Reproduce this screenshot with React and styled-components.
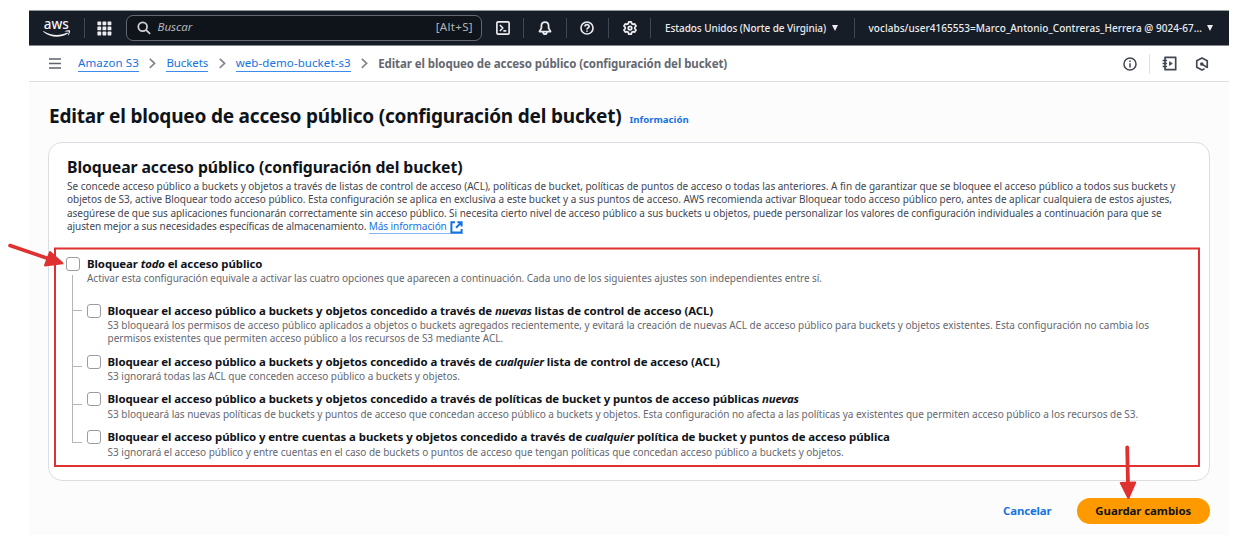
import React from 'react';
import styled, { createGlobalStyle } from 'styled-components';

const GlobalStyle = createGlobalStyle`
  *, *::before, *::after { box-sizing: border-box; }
  body {
    margin: 0;
    background: #fff;
    color: #0f141a;
    font-family: "Noto Sans", "Open Sans", sans-serif;
    overflow: hidden;
  }
  svg { display: block; flex: none; }
`;

const Page = styled.div`
  position: relative;
  width: 1238px;
  height: 545px;
  padding: 10px 9px 0 29px;
`;

const Console = styled.div`
  height: 525px;
  background: #fcfcfd;
`;

const TopBar = styled.header`
  display: flex;
  align-items: center;
  height: 36px;
  padding-left: 14px;
  background: #161d26;
  border-top: 1px solid #8f9c98;
  border-bottom: 1px solid #84878c;
  color: #ebebf0;
`;

const Divider = styled.span`
  flex: none;
  width: 1px;
  height: 20px;
  margin: 0 ${p => p.$right}px 0 ${p => p.$left}px;
  background: ${p => p.$color || '#424650'};
`;

const Search = styled.div`
  display: flex;
  align-items: center;
  width: 356px;
  height: 26px;
  margin: 0 13.5px 0 14px;
  padding: 0 8px 0 10px;
  background: #0f141a;
  border: 1px solid #656871;
  border-radius: 7px;
  font-size: 11.5px;
  line-height: 16px;
  color: #b4b4bb;
`;

const Placeholder = styled.span`
  flex: 1;
  margin: -2px 0 0 6.5px;
  font-style: italic;
`;

const Shortcut = styled.span`
  margin-top: -2px;
  letter-spacing: 0.33px;
`;

const NavText = styled.span`
  font-size: 10px;
  font-weight: 500;
  line-height: 14px;
  white-space: nowrap;
  letter-spacing: ${p => p.$ls}px;
`;

const Caret = styled.span`
  width: 0;
  height: 0;
  margin-left: ${p => p.$gap}px;
  border: 3.5px solid transparent;
  border-top: 6px solid #ebebf0;
  border-bottom: 0;
`;

const Crumbs = styled.nav`
  display: flex;
  align-items: center;
  height: 36px;
  padding: 0 20px 0 20px;
  background: #fff;
  border-bottom: 1px solid #dedee3;
  font-size: 11.5px;
  white-space: nowrap;
`;

const CrumbLink = styled.a`
  height: 16px;
  margin: 0 ${p => p.$right}px 0 ${p => p.$left}px;
  line-height: 14px;
  color: #1473e2;
  border-bottom: 1px solid #3d8bea;
  letter-spacing: ${p => p.$ls}px;
`;

const CrumbCurrent = styled.span`
  flex: 1;
  margin-left: 10px;
  font-weight: 700;
  color: #656871;
  letter-spacing: -0.078px;
`;

const TitleRow = styled.div`
  display: flex;
  align-items: baseline;
  height: 60px;
  padding: 20px 0 0 20px;
  white-space: nowrap;
`;

const Title = styled.h1`
  margin: 0;
  font-size: 19px;
  line-height: 28px;
  letter-spacing: -0.195px;
`;

const InfoLink = styled.a`
  margin-left: 8px;
  font-size: 9.6px;
  font-weight: 700;
  color: #1473e2;
`;

const Card = styled.section`
  width: 1162px;
  height: 339px;
  margin-left: 19px;
  padding: 13.5px 18px 0;
  background: #fff;
  border: 1px solid #dcdde2;
  border-radius: 14px;
`;

const CardTitle = styled.h2`
  margin: 0 0 3.4px;
  font-size: 15.8px;
  line-height: 20px;
  letter-spacing: -0.1px;
  white-space: nowrap;
`;

const Line = styled.div`
  height: 13.4px;
  font-size: 10px;
  line-height: 13.4px;
  white-space: nowrap;
  color: ${p => (p.$dark ? '#424650' : '#656871')};
  letter-spacing: ${p => p.$ls ?? -0.02}px;
`;

const MoreLink = styled.a`
  display: inline-flex;
  align-items: center;
  height: 14px;
  margin-left: 2.5px;
  color: #1473e2;
  box-shadow: inset 0 -1px 0 #86b7f0;

  svg { margin-left: 3px; }
`;

const Options = styled.div`
  margin-top: 21.1px;
`;

const Option = styled.div`
  position: relative;
  display: flex;
  align-items: flex-start;
  gap: 7px;
`;

const Children = styled.div`
  position: relative;
  display: flex;
  flex-direction: column;
  gap: 7px;
  margin-top: 16.2px;
  padding-left: 20.6px;

  &::before {
    content: '';
    position: absolute;
    left: 5px;
    top: -27px;
    width: 1px;
    height: 168px;
    background: #b4b6bb;
  }
`;

const Branch = styled(Option)`
  &::before {
    content: '';
    position: absolute;
    left: -15px;
    top: ${p => p.$tick}px;
    width: 9px;
    height: 1px;
    background: #b4b6bb;
  }
`;

const Checkbox = styled.span`
  flex: none;
  width: 14px;
  height: 14px;
  margin: 2px 0 0 -1px;
  background: #fff;
  border: 1px solid #9a9ca3;
  border-radius: 3px;
`;

const Label = styled.div`
  height: 17px;
  margin-bottom: 0.4px;
  font-size: 11.4px;
  font-weight: 700;
  line-height: 17px;
  letter-spacing: -0.068px;
  white-space: nowrap;

  em { letter-spacing: -0.2px; }
`;

const Actions = styled.footer`
  display: flex;
  justify-content: flex-end;
  align-items: center;
  height: 26px;
  margin: 17px 19px 0 0;
  font-size: 11.4px;
  font-weight: 700;
  line-height: 16px;
`;

const Cancel = styled.a`
  margin-right: 25px;
  padding-bottom: 1px;
  color: #1473e2;
  letter-spacing: -0.14px;
`;

const Save = styled.button`
  width: 133.5px;
  height: 26px;
  padding: 0 0 1px;
  border: 0;
  border-radius: 13px;
  background: #ff9900;
  color: #0f141a;
  font: inherit;
  letter-spacing: -0.06px;
`;

const Annotations = styled.svg`
  position: absolute;
  left: 0;
  top: 0;
  pointer-events: none;
`;

const AwsLogo = () => (
  <svg width="28" height="32" viewBox="0 -6 28 32" fill="#f3f3f7">
    <text x="0.8" y="10.5" fontSize="15" fontWeight="500" textLength="25" lengthAdjust="spacingAndGlyphs">aws</text>
    <path d="M0.4 13C8 18 17 18.2 24.4 14.6L25 15.6C17 20.4 7.5 19.8 0.2 13.8Z" />
    <path d="M21.6 13.2C23.5 12 26.5 12.1 27 12.6C27.4 13.3 26.6 16.3 25.3 17.4L24.9 17.2C25.6 15.6 26 14.1 25.7 13.7C25.3 13.2 23.4 13.4 21.8 13.6Z" />
  </svg>
);

const AppsIcon = () => (
  <svg width="15" height="15" viewBox="0 0 15 15" fill="#ebebf0">
    {[0.4, 5.5, 10.6].map(y => [0.4, 5.5, 10.6].map(x => (
      <rect key={`${x}-${y}`} x={x} y={y} width="3.8" height="3.8" rx="0.6" />
    )))}
  </svg>
);

const Stroke = ({ size = 14, color = '#ebebf0', width = 1.6, children }) => (
  <svg width={size} height={size} viewBox="0 0 16 16" fill="none" stroke={color} strokeWidth={width} strokeLinejoin="round">
    {children}
  </svg>
);

const SearchIcon = () => (
  <Stroke color="#d0d0d6" width={2}><circle cx="6.5" cy="6.5" r="5" /><path d="M10.2 10.2L15 14.8" /></Stroke>
);
const TerminalIcon = () => (
  <Stroke width={1.9}><rect x="1" y="1" width="14" height="14" rx="1.4" /><path d="M4.4 4.6L7.8 8L4.4 11.4M8.4 11.3H11.8" /></Stroke>
);
const BellIcon = () => (
  <Stroke width={2}><path d="M8 1.2C5.2 1.2 3.9 3.2 3.9 5.5V8.1L1.7 12H14.3L12.1 8.1V5.5C12.1 3.2 10.8 1.2 8 1.2Z" /><path d="M5.8 12.4C5.9 15.8 10.1 15.8 10.2 12.4" /></Stroke>
);
const HelpIcon = () => (
  <Stroke width={1.9}><circle cx="8" cy="8" r="6.9" /><path d="M5.7 6.4C5.7 3.4 10.4 3.5 10.4 6.2C10.4 8 8 7.8 8 9.7M8 10.8V12.4" /></Stroke>
);
const GearIcon = () => (
  <Stroke width={2}>
    <path d="M6.6 1H9.4L10 3L11.4 3.8L13.4 3.3L14.9 5.7L13.5 7.2V8.8L14.9 10.3L13.4 12.7L11.4 12.2L10 13L9.4 15H6.6L6 13L4.6 12.2L2.6 12.7L1.1 10.3L2.5 8.8V7.2L1.1 5.7L2.6 3.3L4.6 3.8L6 3Z" />
    <circle cx="8" cy="8" r="2" />
  </Stroke>
);
const MenuIcon = () => (
  <svg width="12" height="12" viewBox="0 0 12 12" stroke="#5f626b" strokeWidth="1.7">
    <path d="M0 1H12M0 5.5H12M0 10H12" />
  </svg>
);
const Chevron = () => (
  <svg width="7" height="11" viewBox="0 0 7 11" fill="none" stroke="#85868f" strokeWidth="1.7">
    <path d="M0.8 0.8L5.6 5.3L0.8 9.8" />
  </svg>
);
const InfoIcon = () => (
  <Stroke color="#424650" width={1.7}><circle cx="8" cy="8" r="6.9" /><path d="M8 7V12M8 4V5.8" /></Stroke>
);
const NotebookIcon = () => (
  <Stroke size={15} color="#424650" width={1.8}>
    <path d="M3.2 1.4H14.6V14.6H3.2ZM0.6 4.8H5.4M0.6 8H5.4M0.6 11.2H5.4" />
    <path d="M8 6V10L11 8Z" fill="#424650" strokeWidth="0.8" />
  </Stroke>
);
const HexIcon = () => (
  <Stroke color="#424650" width={1.9}>
    <path d="M11 13.3L8 14.9L2 11.6V4.4L8 1.1L14 4.4V12L8.4 8.4" />
    <circle cx="7.8" cy="8" r="1.1" fill="#424650" />
  </Stroke>
);
const ExternalIcon = () => (
  <svg width="13" height="13" viewBox="0 0 13 13" fill="none" stroke="#1473e2" strokeWidth="2">
    <path d="M5 1.2H1.4V11.6H11.6V8M7.4 1.2H11.6V5.4M11.4 1.4L6 6.8" />
  </svg>
);

const INTRO = [
  ['Se concede acceso público a buckets y objetos a través de listas de control de acceso (ACL), políticas de bucket, políticas de puntos de acceso o todas las anteriores. A fin de garantizar que se bloquee el acceso público a todos sus buckets y', -0.018],
  ['objetos de S3, active Bloquear todo acceso público. Esta configuración se aplica en exclusiva a este bucket y a sus puntos de acceso. AWS recomienda activar Bloquear todo acceso público pero, antes de aplicar cualquiera de estos ajustes,', -0.023],
  ['asegúrese de que sus aplicaciones funcionarán correctamente sin acceso público. Si necesita cierto nivel de acceso público a sus buckets u objetos, puede personalizar los valores de configuración individuales a continuación para que se', -0.041],
];

const OPTIONS = [
  {
    tick: 8.6,
    label: <>Bloquear el acceso público a buckets y objetos concedido a través de <em>nuevas</em> listas de control de acceso (ACL)</>,
    lines: [
      'S3 bloqueará los permisos de acceso público aplicados a objetos o buckets agregados recientemente, y evitará la creación de nuevas ACL de acceso público para buckets y objetos existentes. Esta configuración no cambia los',
      'permisos existentes que permiten acceso público a los recursos de S3 mediante ACL.',
    ],
  },
  {
    tick: 13.3,
    label: <>Bloquear el acceso público a buckets y objetos concedido a través de <em>cualquier</em> lista de control de acceso (ACL)</>,
    lines: ['S3 ignorará todas las ACL que conceden acceso público a buckets y objetos.'],
  },
  {
    tick: 14,
    label: <>Bloquear el acceso público a buckets y objetos concedido a través de políticas de bucket y puntos de acceso públicas <em>nuevas</em></>,
    lines: ['S3 bloqueará las nuevas políticas de buckets y puntos de acceso que concedan acceso público a buckets y objetos. Esta configuración no afecta a las políticas ya existentes que permiten acceso público a los recursos de S3.'],
  },
  {
    tick: 13.5,
    label: <>Bloquear el acceso público y entre cuentas a buckets y objetos concedido a través de <em>cualquier</em> política de bucket y puntos de acceso pública</>,
    lines: ['S3 ignorará el acceso público y entre cuentas en el caso de buckets o puntos de acceso que tengan políticas que concedan acceso público a buckets y objetos.'],
  },
];

export default function App() {
  return (
    <Page>
      <GlobalStyle />
      <Console>
        <TopBar>
          <AwsLogo />
          <Divider $left={13} $right={12} />
          <AppsIcon />
          <Search>
            <SearchIcon />
            <Placeholder>Buscar</Placeholder>
            <Shortcut>[Alt+S]</Shortcut>
          </Search>
          <TerminalIcon />
          <Divider $left={13.5} $right={13.5} />
          <BellIcon />
          <Divider $left={14} $right={13.5} />
          <HelpIcon />
          <Divider $left={13.5} $right={14} />
          <GearIcon />
          <Divider $left={13.5} $right={14} />
          <NavText $ls={-0.073}>Estados Unidos (Norte de Virginia)</NavText>
          <Caret $gap={5.5} />
          <Divider $left={16} $right={14} />
          <NavText $ls={0.038}>voclabs/user4165553=Marco_Antonio_Contreras_Herrera @ 9024-67...</NavText>
          <Caret $gap={5} />
        </TopBar>

        <Crumbs>
          <MenuIcon />
          <CrumbLink $left={17} $right={10.5} $ls={0.12}>Amazon S3</CrumbLink>
          <Chevron />
          <CrumbLink $left={10} $right={10.5} $ls={-0.1}>Buckets</CrumbLink>
          <Chevron />
          <CrumbLink $left={10} $right={10.5} $ls={0.08}>web-demo-bucket-s3</CrumbLink>
          <Chevron />
          <CrumbCurrent>Editar el bloqueo de acceso público (configuración del bucket)</CrumbCurrent>
          <InfoIcon />
          <Divider $left={12.5} $right={12} $color="#dedee3" />
          <NotebookIcon />
          <Divider $left={16} $right={1} $color="transparent" />
          <HexIcon />
        </Crumbs>

        <TitleRow>
          <Title>Editar el bloqueo de acceso público (configuración del bucket)</Title>
          <InfoLink>Información</InfoLink>
        </TitleRow>

        <Card>
          <CardTitle>Bloquear acceso público (configuración del bucket)</CardTitle>
          {INTRO.map(([text, ls]) => <Line key={text} $dark $ls={ls}>{text}</Line>)}
          <Line $dark $ls={-0.075}>
            ajusten mejor a sus necesidades específicas de almacenamiento.
            <MoreLink>Más información<ExternalIcon /></MoreLink>
          </Line>

          <Options>
            <Option>
              <Checkbox />
              <div>
                <Label>Bloquear <em>todo</em> el acceso público</Label>
                <Line $ls={-0.031}>Activar esta configuración equivale a activar las cuatro opciones que aparecen a continuación. Cada uno de los siguientes ajustes son independientes entre sí.</Line>
              </div>
            </Option>
            <Children>
              {OPTIONS.map(o => (
                <Branch key={o.tick} $tick={o.tick}>
                  <Checkbox />
                  <div>
                    <Label>{o.label}</Label>
                    {o.lines.map(l => <Line key={l}>{l}</Line>)}
                  </div>
                </Branch>
              ))}
            </Children>
          </Options>
        </Card>

        <Actions>
          <Cancel>Cancelar</Cancel>
          <Save>Guardar cambios</Save>
        </Actions>
      </Console>

      <Annotations width="1238" height="545" viewBox="0 0 1238 545" fill="none" stroke="#e03131">
        <rect x="55" y="248.5" width="1144" height="217.5" strokeWidth="2" />
        <path d="M10 245.5L48 258.5" strokeWidth="3.6" strokeLinecap="round" />
        <path d="M50 252L45 265.4L62.4 263.3Z" fill="#e03131" strokeWidth="2" strokeLinejoin="round" />
        <path d="M1127.2 447.5L1128 484" strokeWidth="3.8" strokeLinecap="round" />
        <path d="M1120.8 483L1135.2 482.6L1128.4 498Z" fill="#e03131" strokeWidth="2" strokeLinejoin="round" />
      </Annotations>
    </Page>
  );
}
